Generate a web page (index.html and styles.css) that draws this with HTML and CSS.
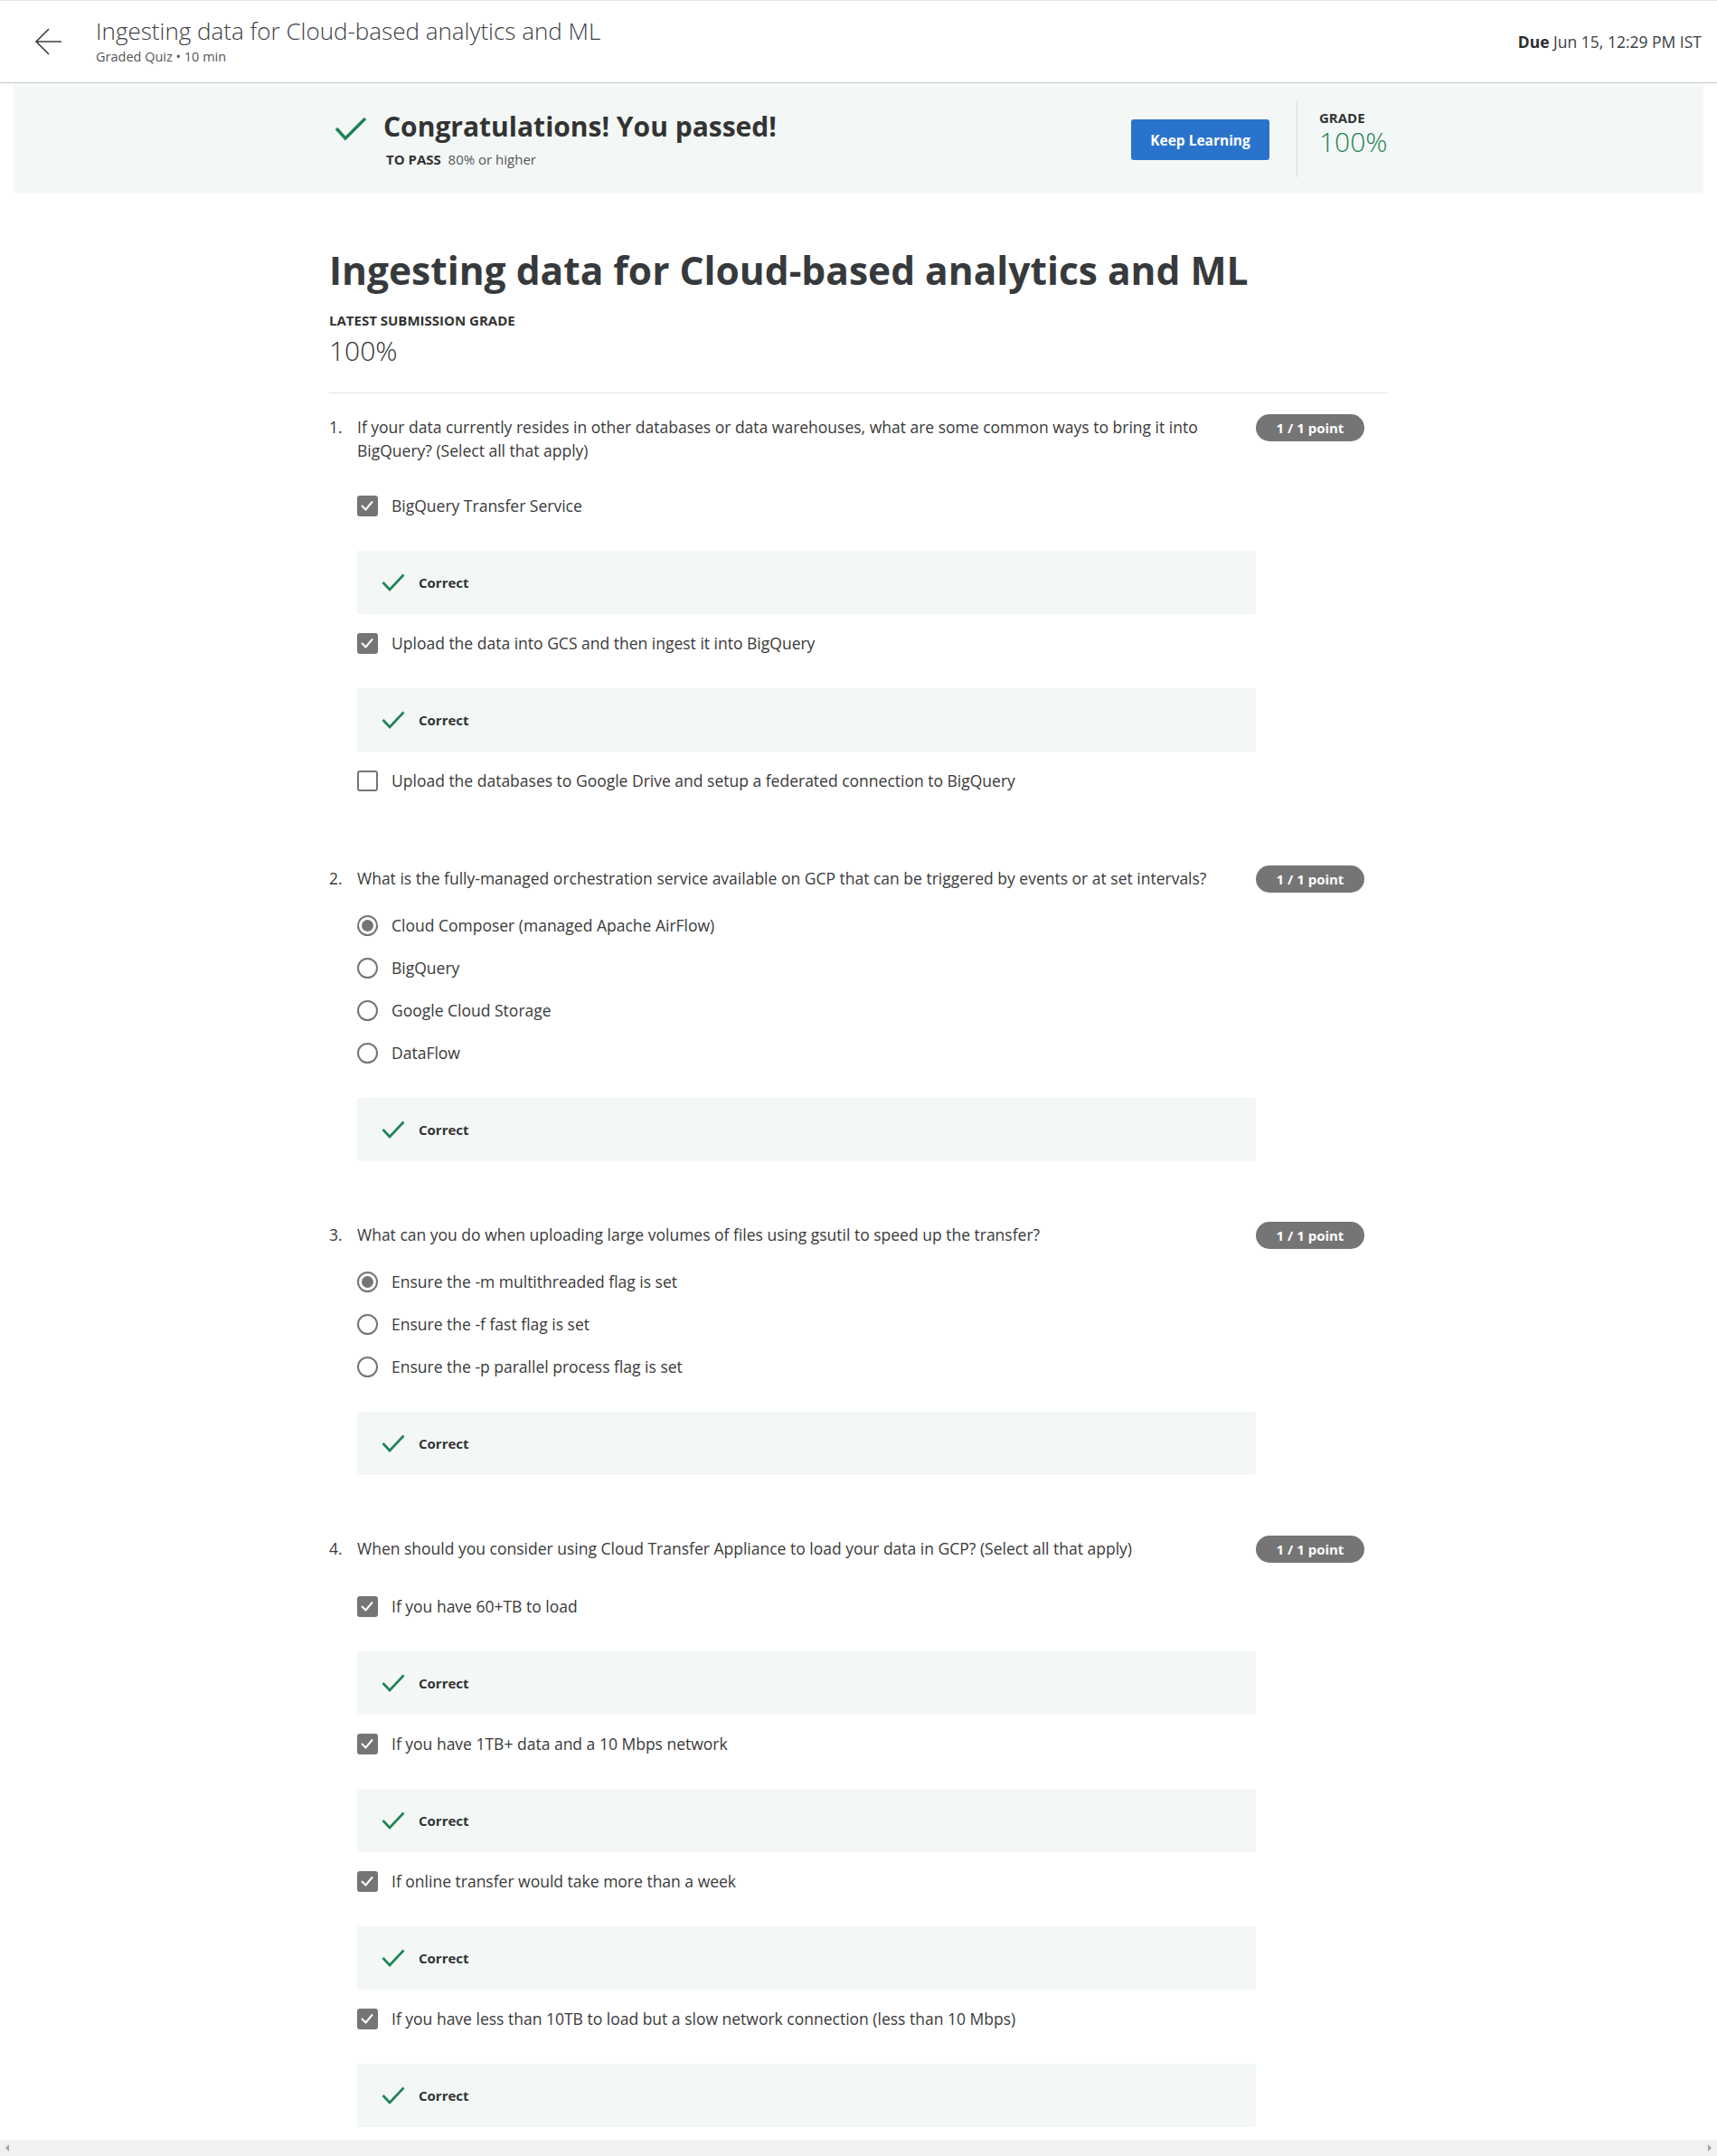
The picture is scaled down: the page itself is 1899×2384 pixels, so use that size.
FILE: index.html
```html
<!DOCTYPE html>
<html lang="en">
<head>
<meta charset="utf-8">
<title>Ingesting data for Cloud-based analytics and ML</title>
<link rel="stylesheet" href="styles.css">
</head>
<body>
<header class="topbar">
  <div class="topbar-left">
    <svg class="back" width="31" height="30" viewBox="0 0 31 30"><path d="M30 15 H2 M16 1 L2 15 L16 29" fill="none" stroke="#3c4043" stroke-width="1.6"/></svg>
    <div class="topbar-titles">
      <div class="topbar-title">Ingesting data for Cloud-based analytics and ML</div>
      <div class="topbar-sub">Graded Quiz • 10 min</div>
    </div>
  </div>
  <div class="due"><b>Due</b> Jun 15, 12:29 PM IST</div>
</header>

<section class="banner">
  <div class="banner-inner">
    <div class="pass">
      <div class="pass-row">
        <svg class="pass-check" width="36" height="27" viewBox="0 0 36 27"><polyline points="2,13 12,24 34,2" fill="none" stroke="#1f8354" stroke-width="3.4"/></svg>
        <div class="pass-title">Congratulations! You passed!</div>
      </div>
      <div class="pass-req"><b>TO PASS</b>&nbsp; 80% or higher</div>
    </div>
    <button class="keep">Keep Learning</button>
    <div class="vdivider"></div>
    <div class="grade">
      <div class="grade-label">GRADE</div>
      <div class="grade-value">100%</div>
    </div>
  </div>
</section>

<main class="content">
  <h1 class="quiz-title">Ingesting data for Cloud-based analytics and ML</h1>
  <div class="latest-label">LATEST SUBMISSION GRADE</div>
  <div class="latest-value">100%</div>
  <hr class="rule">

  <div class="question q-tall">
    <div class="qnum">1.</div>
    <div class="qbody">
      <div class="qtext">If your data currently resides in other databases or data warehouses, what are some common ways to bring it into BigQuery? (Select all that apply)</div>
      <div class="options checks">
        <div class="option"><span class="box checked"><svg width="22" height="22" viewBox="0 0 22 22"><polyline points="5,11 9.5,15.5 17,6.5" fill="none" stroke="#fff" stroke-width="2"/></svg></span><span class="label">BigQuery Transfer Service</span></div>
        <div class="feedback"><svg width="26" height="20" viewBox="0 0 26 20"><polyline points="1.5,10 9,18 24.5,1.5" fill="none" stroke="#1f8354" stroke-width="2.6"/></svg><span>Correct</span></div>
        <div class="option"><span class="box checked"><svg width="22" height="22" viewBox="0 0 22 22"><polyline points="5,11 9.5,15.5 17,6.5" fill="none" stroke="#fff" stroke-width="2"/></svg></span><span class="label">Upload the data into GCS and then ingest it into BigQuery</span></div>
        <div class="feedback"><svg width="26" height="20" viewBox="0 0 26 20"><polyline points="1.5,10 9,18 24.5,1.5" fill="none" stroke="#1f8354" stroke-width="2.6"/></svg><span>Correct</span></div>
        <div class="option"><span class="box"></span><span class="label">Upload the databases to Google Drive and setup a federated connection to BigQuery</span></div>
      </div>
    </div>
    <div class="points">1 / 1 point</div>
  </div>

  <div class="question">
    <div class="qnum">2.</div>
    <div class="qbody">
      <div class="qtext">What is the fully-managed orchestration service available on GCP that can be triggered by events or at set intervals?</div>
      <div class="options radios">
        <div class="option"><span class="radio on"></span><span class="label">Cloud Composer (managed Apache AirFlow)</span></div>
        <div class="option"><span class="radio"></span><span class="label">BigQuery</span></div>
        <div class="option"><span class="radio"></span><span class="label">Google Cloud Storage</span></div>
        <div class="option"><span class="radio"></span><span class="label">DataFlow</span></div>
        <div class="feedback"><svg width="26" height="20" viewBox="0 0 26 20"><polyline points="1.5,10 9,18 24.5,1.5" fill="none" stroke="#1f8354" stroke-width="2.6"/></svg><span>Correct</span></div>
      </div>
    </div>
    <div class="points">1 / 1 point</div>
  </div>

  <div class="question">
    <div class="qnum">3.</div>
    <div class="qbody">
      <div class="qtext">What can you do when uploading large volumes of files using gsutil to speed up the transfer?</div>
      <div class="options radios">
        <div class="option"><span class="radio on"></span><span class="label">Ensure the -m multithreaded flag is set</span></div>
        <div class="option"><span class="radio"></span><span class="label">Ensure the -f fast flag is set</span></div>
        <div class="option"><span class="radio"></span><span class="label">Ensure the -p parallel process flag is set</span></div>
        <div class="feedback"><svg width="26" height="20" viewBox="0 0 26 20"><polyline points="1.5,10 9,18 24.5,1.5" fill="none" stroke="#1f8354" stroke-width="2.6"/></svg><span>Correct</span></div>
      </div>
    </div>
    <div class="points">1 / 1 point</div>
  </div>

  <div class="question">
    <div class="qnum">4.</div>
    <div class="qbody">
      <div class="qtext">When should you consider using Cloud Transfer Appliance to load your data in GCP? (Select all that apply)</div>
      <div class="options checks checks-wide">
        <div class="option"><span class="box checked"><svg width="22" height="22" viewBox="0 0 22 22"><polyline points="5,11 9.5,15.5 17,6.5" fill="none" stroke="#fff" stroke-width="2"/></svg></span><span class="label">If you have 60+TB to load</span></div>
        <div class="feedback"><svg width="26" height="20" viewBox="0 0 26 20"><polyline points="1.5,10 9,18 24.5,1.5" fill="none" stroke="#1f8354" stroke-width="2.6"/></svg><span>Correct</span></div>
        <div class="option"><span class="box checked"><svg width="22" height="22" viewBox="0 0 22 22"><polyline points="5,11 9.5,15.5 17,6.5" fill="none" stroke="#fff" stroke-width="2"/></svg></span><span class="label">If you have 1TB+ data and a 10 Mbps network</span></div>
        <div class="feedback"><svg width="26" height="20" viewBox="0 0 26 20"><polyline points="1.5,10 9,18 24.5,1.5" fill="none" stroke="#1f8354" stroke-width="2.6"/></svg><span>Correct</span></div>
        <div class="option"><span class="box checked"><svg width="22" height="22" viewBox="0 0 22 22"><polyline points="5,11 9.5,15.5 17,6.5" fill="none" stroke="#fff" stroke-width="2"/></svg></span><span class="label">If online transfer would take more than a week</span></div>
        <div class="feedback"><svg width="26" height="20" viewBox="0 0 26 20"><polyline points="1.5,10 9,18 24.5,1.5" fill="none" stroke="#1f8354" stroke-width="2.6"/></svg><span>Correct</span></div>
        <div class="option"><span class="box checked"><svg width="22" height="22" viewBox="0 0 22 22"><polyline points="5,11 9.5,15.5 17,6.5" fill="none" stroke="#fff" stroke-width="2"/></svg></span><span class="label">If you have less than 10TB to load but a slow network connection (less than 10 Mbps)</span></div>
        <div class="feedback"><svg width="26" height="20" viewBox="0 0 26 20"><polyline points="1.5,10 9,18 24.5,1.5" fill="none" stroke="#1f8354" stroke-width="2.6"/></svg><span>Correct</span></div>
      </div>
    </div>
    <div class="points">1 / 1 point</div>
  </div>
</main>

<div class="hscroll">
  <span class="arrow-left"></span>
  <span class="arrow-right"></span>
</div>
</body>
</html>
```

FILE: styles.css
```css
* { box-sizing: border-box; }
html, body { margin: 0; padding: 0; background: #fff; }
body {
  font-family: "Open Sans", "Liberation Sans", sans-serif;
  color: #3a3a3a;
  overflow: hidden;
}

/* top bar */
.topbar {
  height: 92px;
  border-top: 1px solid #e3e3e3;
  border-bottom: 1px solid #c8c8c8;
  display: flex;
  justify-content: space-between;
  align-items: flex-start;
  padding: 0 17px 0 38px;
}
.topbar-left { display: flex; align-items: flex-start; }
.back { margin-top: 30px; margin-right: 37px; }
.topbar-titles { padding-top: 16px; }
.topbar-title { font-size: 26px; font-weight: 300; line-height: 34px; color: #3c4043; }
.topbar-sub { font-size: 14.5px; line-height: 20px; margin-top: 2px; color: #555; }
.due { font-size: 17.5px; line-height: 24px; margin-top: 33px; color: #3c4043; }
.due b { font-weight: 700; color: #2c2c2c; }

/* banner */
.banner {
  margin: 0 15px;
  height: 121px;
  background: #f3f8f6;
}
.banner-inner {
  width: 1171px;
  margin: 0 auto;
  display: flex;
  align-items: flex-start;
}
.pass { flex: 1; padding-left: 6px; padding-top: 29px; }
.pass-row { display: flex; align-items: center; height: 38px; }
.pass-check { margin-right: 18px; margin-top: 4px; }
.pass-title { font-size: 30px; font-weight: 700; line-height: 38px; color: #333; }
.pass-req { margin-left: 57px; margin-top: 7px; font-size: 15px; line-height: 20px; color: #555; }
.pass-req b { color: #333; font-weight: 700; }
.keep {
  margin-top: 40px;
  width: 153px;
  height: 45px;
  border: 0;
  border-radius: 3px;
  background: #2a73cc;
  color: #fff;
  font-family: inherit;
  font-size: 15.5px;
  font-weight: 700;
  padding: 0;
}
.vdivider { width: 1px; height: 85px; margin: 19px 24px 0 30px; background: #dcdcdc; }
.grade { padding-top: 28px; width: 76px; }
.grade-label { font-size: 15px; font-weight: 700; line-height: 20px; color: #333; }
.grade-value { font-size: 30px; font-weight: 300; line-height: 34px; color: #1f8354; }

/* main */
.content { width: 1171px; margin: 0 auto; padding-bottom: 40px; }
.quiz-title { margin: 58px 0 0; font-size: 42.5px; font-weight: 700; line-height: 56px; color: #373a3c; }
.latest-label { margin-top: 17px; font-size: 15px; font-weight: 700; line-height: 20px; color: #333; }
.latest-value { margin-top: 5px; font-size: 30px; font-weight: 300; line-height: 38px; color: #333; }
.rule { margin: 27px 0 0; border: 0; border-top: 1px solid #e3e3e3; height: 0; }

.question { display: grid; grid-template-columns: 31px 994px 120px; margin-top: 68px; }
.rule + .question { margin-top: 24px; }
.q-tall + .question { margin-top: 79px; }
.qnum, .qtext { font-size: 17.5px; line-height: 26px; color: #3a3a3a; }
.points {
  margin-top: -1px;
  height: 30px;
  border-radius: 15px;
  background: #757575;
  color: #fff;
  font-size: 15px;
  font-weight: 700;
  line-height: 30px;
  text-align: center;
}

.options { display: flex; flex-direction: column; }
.checks { margin-top: 32px; }
.checks-wide { margin-top: 35px; }
.radios { margin-top: 23px; gap: 15px; }
.option { display: flex; align-items: center; height: 32px; }
.label { font-size: 17.5px; line-height: 26px; margin-left: 15px; color: #3a3a3a; }
.box {
  width: 23px; height: 23px;
  border: 2px solid #757575;
  border-radius: 3px;
  background: #fff;
  flex: none;
}
.box.checked { border: 0; background: #757575; }
.box svg { display: block; }
.radio {
  width: 23px; height: 23px;
  border: 2px solid #757575;
  border-radius: 50%;
  flex: none;
  display: flex; align-items: center; justify-content: center;
}
.radio.on::after {
  content: "";
  width: 13px; height: 13px;
  border-radius: 50%;
  background: #757575;
}

.feedback {
  height: 70px;
  margin-top: 34px;
  margin-bottom: 16px;
  background: #f3f8f6;
  display: flex;
  align-items: center;
  padding-left: 27px;
  font-size: 15px;
  font-weight: 700;
  color: #333;
}
.radios .feedback { margin-top: 19px; margin-bottom: 0; }
.feedback svg { margin-right: 15px; }
.options .feedback:last-child { margin-bottom: 0; }

/* fake horizontal scrollbar */
.hscroll {
  position: fixed;
  left: 0; right: 0; bottom: 0;
  height: 18px;
  background: #f1f1f1;
  display: flex;
  justify-content: space-between;
  align-items: center;
  padding: 0 6px;
}
.arrow-left, .arrow-right { width: 0; height: 0; border-top: 4px solid transparent; border-bottom: 4px solid transparent; }
.arrow-left { border-right: 4px solid #a3a3a3; }
.arrow-right { border-left: 4px solid #a3a3a3; }
```
